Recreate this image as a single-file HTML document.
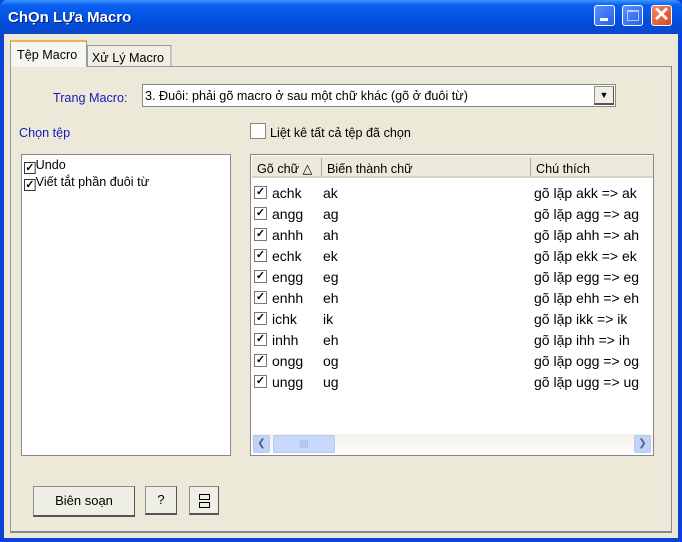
<!DOCTYPE html>
<html><head><meta charset="utf-8"><style>
*{box-sizing:border-box;margin:0;padding:0}
body{width:682px;height:542px;overflow:hidden;background:#0a43d8;font-family:"Liberation Sans",sans-serif;font-size:13px;position:relative}
.a{position:absolute}
#title{left:0;top:0;width:682px;height:34px;background:linear-gradient(#3d95ff,#0a5ff0 15%,#0050e0 60%,#0b47c8);border-radius:7px 7px 0 0}
#tt{left:8px;top:9px;color:#fff;font-weight:bold;font-size:15px;text-shadow:1px 1px #0a1e7a}
.tb{top:5px;width:21px;height:21px;border:1px solid #fff;border-radius:3px;background:linear-gradient(135deg,#5a8fff,#2660e8)}
#client{left:4px;top:34px;width:674px;height:504px;background:#ece9d8}
.tab{background:#f1efe5;border:1px solid #919b9c;border-bottom:none;font-size:13px;color:#000}
#panel{left:10px;top:66px;width:662px;height:467px;border:1px solid #919b9c;border-right-color:#888;border-bottom:2px solid #888;background:#ece9d8}
.box{background:#fff;border:1px solid #7f9db9}
.cb{width:13px;height:13px;border:1px solid #777;background:#fff;font-size:11px;line-height:11px;text-align:center;font-weight:bold}
.row{left:254px;height:21px;width:400px;font-size:14px}
.row span{position:absolute;top:2px}
.btn{background:#f0efe6;border:1px solid #8f8f8f;border-right-color:#555;border-bottom:2px solid #555;text-align:center;font-size:13px}
.n{transform-origin:0 0;transform:scaleX(.97);white-space:nowrap}
</style></head><body>
<div class="a" id="title"></div>
<div class="a" id="tt">ChỌn LỰa Macro</div>
<div class="a tb" style="left:594px"><div class="a" style="left:5px;top:12px;width:8px;height:3px;background:#fff"></div></div>
<div class="a tb" style="left:622px"><div class="a" style="left:4px;top:4px;width:12px;height:11px;border:1px solid #fff;border-top-width:2px;opacity:.6"></div></div>
<div class="a tb" style="left:651px;background:linear-gradient(135deg,#ef8a6a,#d8461f);color:#fff;font-weight:bold;font-size:20px;line-height:19px;text-align:center">✕</div>
<div class="a" id="client"></div>
<div class="a" id="panel"></div>
<div class="a tab n" style="left:87px;top:45px;width:87px;height:21px;padding:4px 0 0 4px">Xử Lý Macro</div>
<div class="a tab" style="left:10px;top:40px;width:77px;height:27px;background:#f7f6f0;border-top:2px solid #f0b060"><span class="n a" style="left:6px;top:5px">Tệp Macro</span></div>
<div class="a n" style="left:53px;top:90px;color:#1818c0">Trang Macro:</div>
<div class="a box" style="left:142px;top:84px;width:474px;height:23px;border-color:#888"></div>
<div class="a n" style="left:145px;top:88px">3. Đuôi: phải gõ macro ở sau một chữ khác (gõ ở đuôi từ)</div>
<div class="a btn" style="left:594px;top:86px;width:20px;height:19px;font-size:9px;line-height:16px">▼</div>
<div class="a n" style="left:19px;top:125px;color:#1818c0">Chọn tệp</div>
<div class="a cb" style="left:250px;top:123px;width:16px;height:16px;border-color:#888"></div>
<div class="a n" style="left:270px;top:125px">Liệt kê tất cả tệp đã chọn</div>
<div class="a box" style="left:21px;top:154px;width:210px;height:302px;border-color:#888"></div>
<div class="a n" style="left:24px;top:157px;line-height:15px"><div><span class="cb" style="display:inline-block;vertical-align:-2px;width:12px;height:12px;border-color:#333">✓</span>Undo</div><div><span class="cb" style="display:inline-block;vertical-align:-2px;width:12px;height:12px;border-color:#333">✓</span>Viết tắt phần đuôi từ</div></div>
<div class="a box" style="left:250px;top:154px;width:404px;height:302px;border-color:#888"></div>
<div class="a" style="left:252px;top:156px;width:401px;height:22px;background:#ebeadb;border-bottom:2px solid #d6d2c2"></div>
<div class="a n" style="left:257px;top:161px">Gõ chữ △</div>
<div class="a" style="left:321px;top:158px;width:1px;height:18px;background:#aca899"></div>
<div class="a n" style="left:327px;top:161px">Biến thành chữ</div>
<div class="a" style="left:530px;top:158px;width:1px;height:18px;background:#aca899"></div>
<div class="a n" style="left:536px;top:161px">Chú thích</div>
<div class="a" style="left:252px;top:434px;width:401px;height:20px;background:linear-gradient(#f3f1ec,#fefefe)"></div>
<div class="a" style="left:253px;top:435px;width:17px;height:18px;background:#c1d3fb;border:1px solid #b8c8f0;border-radius:2px;font-size:10px;text-align:center;line-height:16px;color:#4d6185">❮</div>
<div class="a" style="left:273px;top:435px;width:62px;height:18px;background:#c8d8fb;border:1px solid #b8c8f0;border-radius:2px;font-size:8px;text-align:center;line-height:16px;color:#8da0cc">||||</div>
<div class="a" style="left:634px;top:435px;width:17px;height:18px;background:#c1d3fb;border:1px solid #b8c8f0;border-radius:2px;font-size:10px;text-align:center;line-height:16px;color:#4d6185">❯</div>
<div class="a row" style="top:183px"><span class="cb" style="left:0;top:3px">✓</span><span style="left:18px">achk</span><span style="left:69px">ak</span><span style="left:280px">gõ lặp akk =&gt; ak</span></div>
<div class="a row" style="top:204px"><span class="cb" style="left:0;top:3px">✓</span><span style="left:18px">angg</span><span style="left:69px">ag</span><span style="left:280px">gõ lặp agg =&gt; ag</span></div>
<div class="a row" style="top:225px"><span class="cb" style="left:0;top:3px">✓</span><span style="left:18px">anhh</span><span style="left:69px">ah</span><span style="left:280px">gõ lặp ahh =&gt; ah</span></div>
<div class="a row" style="top:246px"><span class="cb" style="left:0;top:3px">✓</span><span style="left:18px">echk</span><span style="left:69px">ek</span><span style="left:280px">gõ lặp ekk =&gt; ek</span></div>
<div class="a row" style="top:267px"><span class="cb" style="left:0;top:3px">✓</span><span style="left:18px">engg</span><span style="left:69px">eg</span><span style="left:280px">gõ lặp egg =&gt; eg</span></div>
<div class="a row" style="top:288px"><span class="cb" style="left:0;top:3px">✓</span><span style="left:18px">enhh</span><span style="left:69px">eh</span><span style="left:280px">gõ lặp ehh =&gt; eh</span></div>
<div class="a row" style="top:309px"><span class="cb" style="left:0;top:3px">✓</span><span style="left:18px">ichk</span><span style="left:69px">ik</span><span style="left:280px">gõ lặp ikk =&gt; ik</span></div>
<div class="a row" style="top:330px"><span class="cb" style="left:0;top:3px">✓</span><span style="left:18px">inhh</span><span style="left:69px">eh</span><span style="left:280px">gõ lặp ihh =&gt; ih</span></div>
<div class="a row" style="top:351px"><span class="cb" style="left:0;top:3px">✓</span><span style="left:18px">ongg</span><span style="left:69px">og</span><span style="left:280px">gõ lặp ogg =&gt; og</span></div>
<div class="a row" style="top:372px"><span class="cb" style="left:0;top:3px">✓</span><span style="left:18px">ungg</span><span style="left:69px">ug</span><span style="left:280px">gõ lặp ugg =&gt; ug</span></div>
<div class="a btn" style="left:33px;top:486px;width:102px;height:31px;line-height:27px">Biên soạn</div>
<div class="a btn" style="left:145px;top:486px;width:32px;height:29px;line-height:25px">?</div>
<div class="a btn" style="left:189px;top:486px;width:30px;height:29px"><div class="a" style="left:9px;top:7px;width:11px;height:6px;border:1px solid #000"></div><div class="a" style="left:9px;top:15px;width:11px;height:6px;border:1px solid #000"></div></div>
</body></html>
